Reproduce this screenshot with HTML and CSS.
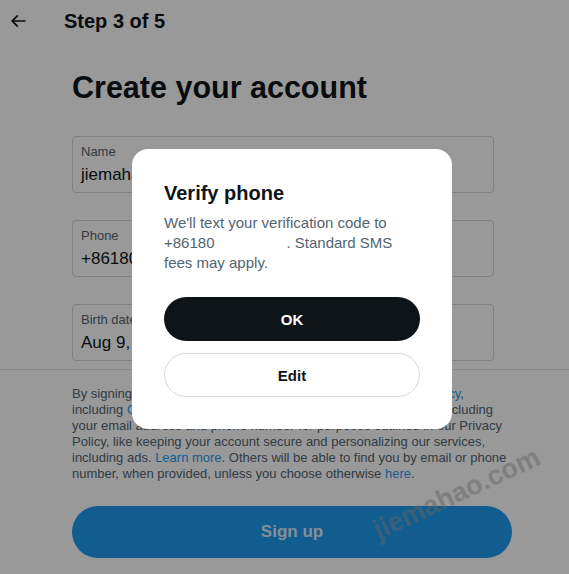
FILE: index.html
```html
<!DOCTYPE html>
<html lang="en">
<head>
<meta charset="utf-8">
<title>Create your account</title>
<link rel="stylesheet" href="styles.css">
</head>
<body>
<div class="app">
  <header class="topbar">
    <button class="back" aria-label="Back">
      <svg viewBox="0 0 24 24" width="20" height="20"><path d="M7.414 13l5.043 5.04-1.414 1.42L3.586 12l7.457-7.46 1.414 1.42L7.414 11H21v2H7.414z"/></svg>
    </button>
    <h2 class="step">Step 3 of 5</h2>
  </header>
  <main class="content">
    <h1 class="title">Create your account</h1>
    <div class="fields">
      <div class="field"><span class="label">Name</span><span class="value">jiemahao</span></div>
      <div class="field"><span class="label">Phone</span><span class="value">+86180</span></div>
      <div class="field"><span class="label">Birth date</span><span class="value">Aug 9, 2000</span></div>
    </div>
  </main>
  <footer class="foot">
    <p class="legal">By signing up, you agree to the <a>Terms of Service</a> and <a>Privacy Policy</a>, including <a>Cookie Use</a>. Twitter may use your contact information, including your email address and phone number for purposes outlined in our Privacy Policy, like keeping your account secure and personalizing our services, including ads. <a>Learn more</a>. Others will be able to find you by email or phone number, when provided, unless you choose otherwise <a>here</a>.</p>
    <button class="signup">Sign up</button>
  </footer>
</div>
<div class="overlay"></div>
<div class="dialog" role="dialog">
  <h3 class="dlg-title">Verify phone</h3>
  <p class="dlg-text">We'll text your verification code to +86180<span class="masked"></span>. Standard SMS<br>fees may apply.</p>
  <div class="dlg-actions">
    <button class="btn btn-dark">OK</button>
    <button class="btn btn-outline">Edit</button>
  </div>
</div>
<div class="watermark">jiemahao.com</div>
</body>
</html>
```

FILE: styles.css
```css
* { box-sizing: border-box; }
html, body { margin: 0; padding: 0; }
body {
  width: 569px;
  height: 574px;
  overflow: hidden;
  background: #fff;
  font-family: "Liberation Sans", Arial, sans-serif;
  color: #0f1419;
}
button { font-family: inherit; cursor: pointer; }

.app {
  display: flex;
  flex-direction: column;
  height: 574px;
}

.topbar {
  height: 42px;
  display: flex;
  align-items: center;
  padding-left: 8px;
  flex: none;
}
.back {
  width: 20px;
  height: 20px;
  padding: 0;
  border: 0;
  background: none;
  display: flex;
}
.back svg { fill: #0f1419; }
.step {
  margin: 0 0 0 36px;
  font-size: 20px;
  line-height: 24px;
  font-weight: 700;
}

.content {
  flex: 1;
  padding: 0 0 0 72px;
}
.title {
  margin: 27px 0 31px;
  font-size: 30.5px;
  line-height: 36px;
  font-weight: 700;
}
.fields {
  display: flex;
  flex-direction: column;
  gap: 27px;
  width: 422px;
}
.field {
  height: 57px;
  border: 1px solid #cfd9de;
  border-radius: 4px;
  padding: 7px 8px 0;
  display: flex;
  flex-direction: column;
  overflow: hidden;
}
.label {
  font-size: 13px;
  line-height: 16px;
  color: #536471;
}
.value {
  margin-top: 3px;
  font-size: 17px;
  line-height: 24px;
  color: #0f1419;
  white-space: nowrap;
}

.foot {
  flex: none;
  border-top: 1px solid #dde3e6;
  padding: 16px 0 16px 72px;
}
.legal {
  margin: 0;
  width: 438px;
  font-size: 13px;
  line-height: 16px;
  color: #536471;
}
.legal a { color: #1d9bf0; }
.signup {
  margin-top: 24px;
  width: 440px;
  height: 52px;
  border: 0;
  border-radius: 26px;
  background: #1d9bf0;
  color: rgba(255, 255, 255, 0.85);
  font-size: 17px;
  font-weight: 700;
}

.overlay {
  position: fixed;
  inset: 0;
  background: rgba(0, 0, 0, 0.4);
}

.dialog {
  position: fixed;
  left: 132px;
  top: 149px;
  width: 320px;
  background: #fff;
  border-radius: 16px;
  padding: 32px;
}
.dlg-title {
  margin: 0;
  font-size: 20px;
  line-height: 24px;
  font-weight: 700;
  color: #0f1419;
}
.dlg-text {
  margin: 8px 0 24px;
  font-size: 15px;
  line-height: 20px;
  color: #536471;
}
.masked {
  display: inline-block;
  width: 72px;
}
.dlg-actions {
  display: flex;
  flex-direction: column;
  gap: 12px;
}
.btn {
  height: 44px;
  border-radius: 22px;
  font-size: 15px;
  font-weight: 700;
}
.btn-dark {
  background: #0f1419;
  color: #fff;
  border: 0;
}
.btn-outline {
  background: #fff;
  color: #0f1419;
  border: 1px solid #cfd9de;
}

.watermark {
  position: fixed;
  left: 457px;
  top: 494px;
  transform: translate(-50%, -50%) rotate(-25deg);
  font-size: 27px;
  font-weight: 700;
  color: rgba(100, 100, 100, 0.5);
  white-space: nowrap;
  pointer-events: none;
}
```
